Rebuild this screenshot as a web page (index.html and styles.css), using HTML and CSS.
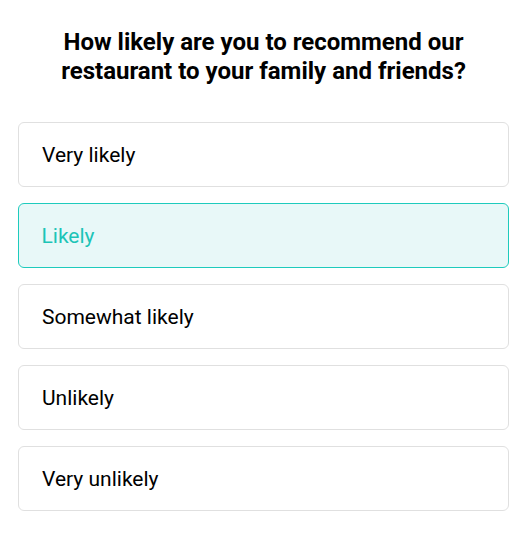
FILE: index.html
```html
<!DOCTYPE html>
<html>
<head>
<meta charset="utf-8">
<link rel="stylesheet" href="styles.css">
</head>
<body>
<div class="survey">
  <h1 class="question">How likely are you to recommend our restaurant to your family and friends?</h1>
  <div class="options">
    <div class="option">Very likely</div>
    <div class="option selected">Likely</div>
    <div class="option">Somewhat likely</div>
    <div class="option">Unlikely</div>
    <div class="option">Very unlikely</div>
  </div>
</div>
</body>
</html>
```
FILE: styles.css
```css
html, body {
  margin: 0;
  padding: 0;
  background: #ffffff;
}
body {
  font-family: Roboto, "Liberation Sans", sans-serif;
  color: #000;
}
.survey {
  padding: 28px 19px 0 18px;
}
.question {
  margin: 0 auto;
  width: 460px;
  text-align: center;
  font-size: 24px;
  line-height: 29px;
  font-weight: 700;
  color: #000;
}
.options {
  margin-top: 36px;
  display: flex;
  flex-direction: column;
  gap: 16px;
}
.option {
  height: 65px;
  box-sizing: border-box;
  border: 1px solid #e0e0e0;
  border-radius: 6px;
  padding: 0 23px;
  display: flex;
  align-items: center;
  font-size: 21px;
  color: #000;
}
.option.selected {
  border: 1.5px solid #1ecbbd;
  padding: 0 22.5px;
  background: #e8f8f8;
  color: #1cc4b7;
}
```
